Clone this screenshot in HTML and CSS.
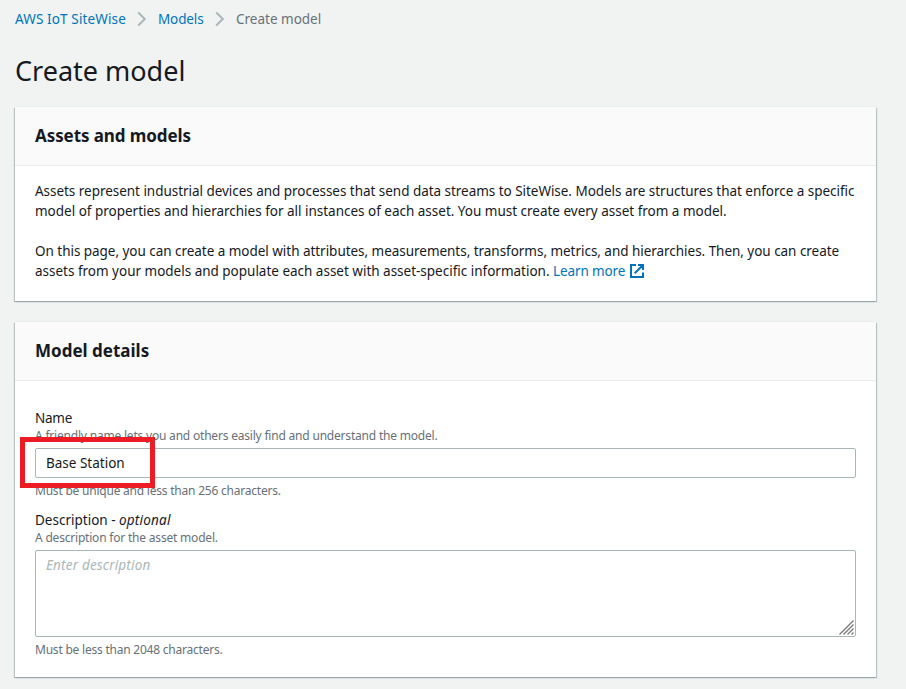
FILE: index.html
```
<!DOCTYPE html>
<html lang="en">
<head>
<meta charset="utf-8">
<title>Create model</title>
<link rel="stylesheet" href="styles.css">
</head>
<body>
<nav class="breadcrumbs">
  <a class="crumb crumb-service" href="#">AWS IoT SiteWise</a>
  <svg class="chevron" width="10" height="16" viewBox="0 0 10 16"><path d="M1.2 1.5 7.8 8 1.2 14.5"/></svg>
  <a class="crumb crumb-models" href="#">Models</a>
  <svg class="chevron" width="10" height="16" viewBox="0 0 10 16"><path d="M1.2 1.5 7.8 8 1.2 14.5"/></svg>
  <span class="current">Create model</span>
</nav>
<h1>Create model</h1>
<main>
  <section class="card">
    <header><h2 class="title-assets">Assets and models</h2></header>
    <div class="intro">
      <p><span class="snug">Assets represent industrial devices and processes that send data streams to SiteWise. Models are structures that enforce a specific</span><br><span class="closing">model of properties and hierarchies for all instances of each asset. You must create every asset from a model.</span></p>
      <p><span class="snug">On this page, you can create a model with attributes, measurements, transforms, metrics, and hierarchies. Then, you can create</span><br><span class="closing">assets from your models and populate each asset with asset-specific information.</span> <a class="learn" href="#">Learn more<svg class="external" width="14" height="14" viewBox="0 0 14 14"><path d="M6 1H1V13H13V8.5M8 1H13V6M13 1 4.7 9.3"/></svg></a></p>
    </div>
  </section>
  <section class="card">
    <header><h2>Model details</h2></header>
    <form class="details">
      <div class="field">
        <label class="name-label" for="name">Name</label>
        <p class="hint">A friendly name lets you and others easily find and understand the model.</p>
        <div class="control">
          <input id="name" type="text" value="Base Station">
          <div class="highlight"></div>
        </div>
        <p class="constraint">Must be unique and less than 256 characters.</p>
      </div>
      <div class="field">
        <label for="description">Description - <em>optional</em></label>
        <p class="hint">A description for the asset model.</p>
        <div class="control">
          <textarea id="description" placeholder="Enter description"></textarea>
          <svg class="grip" width="15" height="15" viewBox="0 0 15 15"><path d="M.5 14.5l14-14M4.5 14.5l10-10M8.5 14.5l6-6M12.5 14.5l2-2"/></svg>
        </div>
        <p class="constraint">Must be less than 2048 characters.</p>
      </div>
    </form>
  </section>
</main>
</body>
</html>
```
FILE: styles.css
```
* { box-sizing: border-box; }
body {
  margin: 0;
  height: 689px;
  overflow: hidden;
  background: #f1f3f3;
  color: #16191f;
  font: 13.5px/20px "Noto Sans", sans-serif;
}
h1, h2, p { margin: 0; }
a { color: #0073bb; text-decoration: none; }
.breadcrumbs { display: flex; align-items: center; height: 20px; margin: 9px 0 0 15px; }
.crumb-service { width: 111px; letter-spacing: .13px; white-space: nowrap; }
.crumb-models { width: 46px; letter-spacing: -.13px; }
.chevron { margin: 0 11px; fill: none; stroke: #aab7b8; stroke-width: 2; }
.current { color: #687078; }
h1 { margin: 24px 0 0 15px; height: 36px; font-size: 27px; line-height: 36px; font-weight: 400; }
main { display: flex; flex-direction: column; gap: 21px; width: 861px; margin: 18px 0 0 15px; }
.card { background: #fff; box-shadow: 0 -1px 0 #eaeded, 0 1px 0 #9ba7a8, 1px 1px 1px #b9c1c2, -1px 1px 1px #b9c1c2; }
.card header { height: 59px; padding: 18px 20px 0; background: #fafafa; border-bottom: 1px solid #eaeded; }
h2 { font-size: 17px; line-height: 22px; font-weight: 700; }
.title-assets { letter-spacing: -.08px; }
.intro { height: 135px; padding: 15px 20px 0; white-space: nowrap; }
.intro p + p { margin-top: 20px; }
.snug { letter-spacing: -.035px; }
.closing { letter-spacing: -.01px; }
.learn { letter-spacing: -.12px; }
.external { margin-left: 5px; vertical-align: -2px; fill: none; stroke: #0073bb; stroke-width: 2; }
.details { display: flex; flex-direction: column; gap: 11px; height: 296px; padding: 27px 20px 0; }
.field label { display: block; }
.name-label { letter-spacing: -.25px; }
label em { letter-spacing: .2px; }
.hint, .constraint { color: #687078; font-size: 12px; line-height: 16px; letter-spacing: -.2px; }
.constraint { letter-spacing: -.22px; }
.control { position: relative; display: flex; margin: 4px 0 5px; }
input, textarea {
  width: 821px;
  height: 30px;
  margin: 0;
  padding: 0 10px;
  border: 1px solid #aab7b8;
  border-radius: 2px;
  outline: 0;
  background: #fff;
  color: #16191f;
  font: inherit;
}
textarea { height: 87px; padding-top: 4px; resize: none; }
textarea::placeholder { color: #aab7b8; font-style: italic; letter-spacing: .18px; opacity: 1; }
.highlight { position: absolute; left: -15px; top: -11px; width: 135px; height: 51px; border: 5px solid #ed1c24; }
.grip { position: absolute; right: 2px; bottom: 2px; fill: none; stroke: #777; stroke-width: 1.3; }
```
